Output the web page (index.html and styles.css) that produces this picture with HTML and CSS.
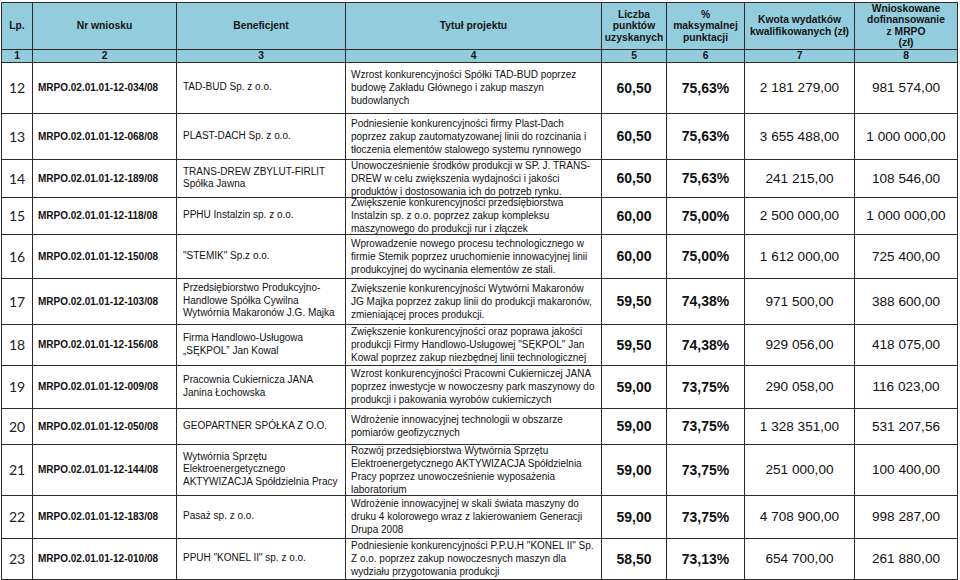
FILE: index.html
```html
<!DOCTYPE html>
<html lang="pl">
<head>
<meta charset="utf-8">
<title>Lista projektów MRPO</title>
<link rel="stylesheet" href="styles.css">
</head>
<body>
<div class="wrap">
<table class="grid">
  <colgroup>
    <col class="c-lp"><col class="c-nr"><col class="c-ben"><col class="c-tyt"><col class="c-pkt"><col class="c-proc"><col class="c-kw"><col class="c-dof">
  </colgroup>
  <thead>
    <tr class="head">
      <th>Lp.</th>
      <th>Nr wniosku</th>
      <th>Beneficjent</th>
      <th>Tytuł projektu</th>
      <th>Liczba<br>punktów<br>uzyskanych</th>
      <th>%<br>maksymalnej<br>punktacji</th>
      <th>Kwota wydatków<br>kwalifikowanych (zł)</th>
      <th>Wnioskowane<br>dofinansowanie<br>z MRPO<br>(zł)</th>
    </tr>
    <tr class="nums">
      <th>1</th><th>2</th><th>3</th><th>4</th><th>5</th><th>6</th><th>7</th><th>8</th>
    </tr>
  </thead>
  <tbody>
    <tr class="h51">
      <td class="lp">12</td><td class="nr">MRPO.02.01.01-12-034/08</td>
      <td class="ben">TAD-BUD Sp. z o.o.</td>
      <td class="tyt"><div class="t">Wzrost konkurencyjności Spółki TAD-BUD poprzez<br>budowę Zakładu Głównego i zakup maszyn<br>budowlanych</div></td>
      <td class="pkt">60,50</td><td class="proc">75,63%</td><td class="kw">2 181 279,00</td><td class="kw">981 574,00</td>
    </tr>
    <tr class="h46">
      <td class="lp">13</td><td class="nr">MRPO.02.01.01-12-068/08</td>
      <td class="ben">PLAST-DACH Sp. z o.o.</td>
      <td class="tyt"><div class="t">Podniesienie konkurencyjności firmy Plast-Dach<br>poprzez zakup zautomatyzowanej linii do rozcinania i<br>tłoczenia elementów stalowego systemu rynnowego</div></td>
      <td class="pkt">60,50</td><td class="proc">75,63%</td><td class="kw">3 655 488,00</td><td class="kw">1 000 000,00</td>
    </tr>
    <tr class="h38">
      <td class="lp">14</td><td class="nr">MRPO.02.01.01-12-189/08</td>
      <td class="ben">TRANS-DREW ZBYLUT-FIRLIT<br>Spółka Jawna</td>
      <td class="tyt"><div class="t">Unowocześnienie środków produkcji w SP. J. TRANS-<br>DREW w celu zwiększenia wydajności i jakości<br>produktów i dostosowania ich do potrzeb rynku.</div></td>
      <td class="pkt">60,50</td><td class="proc">75,63%</td><td class="kw">241 215,00</td><td class="kw">108 546,00</td>
    </tr>
    <tr class="h37">
      <td class="lp">15</td><td class="nr">MRPO.02.01.01-12-118/08</td>
      <td class="ben">PPHU Instalzin sp. z o.o.</td>
      <td class="tyt"><div class="t">Zwiększenie konkurencyjności przedsiębiorstwa<br>Instalzin sp. z o.o. poprzez zakup kompleksu<br>maszynowego do produkcji rur i złączek</div></td>
      <td class="pkt">60,00</td><td class="proc">75,00%</td><td class="kw">2 500 000,00</td><td class="kw">1 000 000,00</td>
    </tr>
    <tr class="h44">
      <td class="lp">16</td><td class="nr">MRPO.02.01.01-12-150/08</td>
      <td class="ben">"STEMIK" Sp.z o.o.</td>
      <td class="tyt"><div class="t">Wprowadzenie nowego procesu technologicznego w<br>firmie Stemik poprzez uruchomienie innowacyjnej linii<br>produkcyjnej do wycinania elementów ze stali.</div></td>
      <td class="pkt">60,00</td><td class="proc">75,00%</td><td class="kw">1 612 000,00</td><td class="kw">725 400,00</td>
    </tr>
    <tr class="h46">
      <td class="lp">17</td><td class="nr">MRPO.02.01.01-12-103/08</td>
      <td class="ben">Przedsiębiorstwo Produkcyjno-<br>Handlowe Spółka Cywilna<br>Wytwórnia Makaronów J.G. Majka</td>
      <td class="tyt"><div class="t">Zwiększenie konkurencyjności Wytwórni Makaronów<br>JG Majka poprzez zakup linii do produkcji makaronów,<br>zmieniającej proces produkcji.</div></td>
      <td class="pkt">59,50</td><td class="proc">74,38%</td><td class="kw">971 500,00</td><td class="kw">388 600,00</td>
    </tr>
    <tr class="h41">
      <td class="lp">18</td><td class="nr">MRPO.02.01.01-12-156/08</td>
      <td class="ben">Firma Handlowo-Usługowa<br>„SĘKPOL” Jan Kowal</td>
      <td class="tyt"><div class="t">Zwiększenie konkurencyjności oraz poprawa jakości<br>produkcji Firmy Handlowo-Usługowej "SĘKPOL" Jan<br>Kowal poprzez zakup niezbędnej linii technologicznej</div></td>
      <td class="pkt">59,50</td><td class="proc">74,38%</td><td class="kw">929 056,00</td><td class="kw">418 075,00</td>
    </tr>
    <tr class="h43">
      <td class="lp">19</td><td class="nr">MRPO.02.01.01-12-009/08</td>
      <td class="ben">Pracownia Cukiernicza JANA<br>Janina Łochowska</td>
      <td class="tyt"><div class="t">Wzrost konkurencyjności Pracowni Cukierniczej JANA<br>poprzez inwestycje w nowoczesny park maszynowy do<br>produkcji i pakowania wyrobów cukierniczych</div></td>
      <td class="pkt">59,00</td><td class="proc">73,75%</td><td class="kw">290 058,00</td><td class="kw">116 023,00</td>
    </tr>
    <tr class="h36">
      <td class="lp">20</td><td class="nr">MRPO.02.01.01-12-050/08</td>
      <td class="ben">GEOPARTNER SPÓŁKA Z O.O.</td>
      <td class="tyt"><div class="t">Wdrożenie innowacyjnej technologii w obszarze<br>pomiarów geofizycznych</div></td>
      <td class="pkt">59,00</td><td class="proc">73,75%</td><td class="kw">1 328 351,00</td><td class="kw">531 207,56</td>
    </tr>
    <tr class="h51">
      <td class="lp">21</td><td class="nr">MRPO.02.01.01-12-144/08</td>
      <td class="ben">Wytwórnia Sprzętu<br>Elektroenergetycznego<br>AKTYWIZACJA Spółdzielnia Pracy</td>
      <td class="tyt"><div class="t">Rozwój przedsiębiorstwa Wytwórnia Sprzętu<br>Elektroenergetycznego AKTYWIZACJA Spółdzielnia<br>Pracy poprzez unowocześnienie wyposażenia<br>laboratorium</div></td>
      <td class="pkt">59,00</td><td class="proc">73,75%</td><td class="kw">251 000,00</td><td class="kw">100 400,00</td>
    </tr>
    <tr class="h43">
      <td class="lp">22</td><td class="nr">MRPO.02.01.01-12-183/08</td>
      <td class="ben">Pasaż sp. z o.o.</td>
      <td class="tyt"><div class="t">Wdrożenie innowacyjnej w skali świata maszyny do<br>druku 4 kolorowego wraz z lakierowaniem Generacji<br>Drupa 2008</div></td>
      <td class="pkt">59,00</td><td class="proc">73,75%</td><td class="kw">4 708 900,00</td><td class="kw">998 287,00</td>
    </tr>
    <tr class="h41">
      <td class="lp">23</td><td class="nr">MRPO.02.01.01-12-010/08</td>
      <td class="ben">PPUH "KONEL II" sp. z o.o.</td>
      <td class="tyt"><div class="t">Podniesienie konkurencyjności P.P.U.H "KONEL II" Sp.<br>Z o.o. poprzez zakup nowoczesnych maszyn dla<br>wydziału przygotowania produkcji</div></td>
      <td class="pkt">58,50</td><td class="proc">73,13%</td><td class="kw">654 700,00</td><td class="kw">261 880,00</td>
    </tr>
  </tbody>
</table>
</div>
</body>
</html>
```

FILE: styles.css
```css
html, body {
  margin: 0;
  padding: 0;
  background: #ffffff;
}

body {
  font-family: "Liberation Sans", Arial, sans-serif;
  color: #111111;
}

.wrap {
  padding: 2px 0 0 1px;
}

.grid {
  border-collapse: collapse;
  table-layout: fixed;
  width: 957px;
  border: 1px solid #3e5a68;
}

.c-lp { width: 31px; }
.c-nr { width: 144px; }
.c-ben { width: 169px; }
.c-tyt { width: 256px; }
.c-pkt { width: 65px; }
.c-proc { width: 78px; }
.c-kw { width: 110px; }
.c-dof { width: 103px; }

.grid th,
.grid td {
  border: 1px solid #2b2b2b;
  padding: 0;
  vertical-align: middle;
}

.grid thead th {
  background: #93cddd;
  font-weight: bold;
  font-size: 10.3px;
  line-height: 11.4px;
  text-align: center;
  color: #141414;
}

.head th {
  height: 44px;
}

.nums th {
  height: 12px;
  line-height: 12px;
}

.lp {
  font-family: Lato, "Open Sans", sans-serif;
  font-size: 14px;
  text-align: center;
  color: #222222;
}

.nr {
  font-weight: bold;
  font-size: 10px;
  padding-left: 5px !important;
  white-space: nowrap;
}

.ben {
  font-size: 10px;
  line-height: 12.6px;
  padding-left: 6px !important;
}

.tyt {
  font-size: 10px;
  padding-left: 5px !important;
}

.t {
  display: flex;
  flex-direction: column;
  justify-content: center;
  line-height: 13px;
  white-space: nowrap;
  overflow: visible;
}

.pkt,
.proc {
  font-weight: bold;
  font-size: 14px;
  text-align: center;
}

.kw {
  font-size: 13.6px;
  text-align: center;
}

.h36 .t { height: 35px; }
.h37 .t { height: 36px; }
.h38 .t { height: 37px; }
.h41 .t { height: 40px; }
.h43 .t { height: 42px; }
.h44 .t { height: 43px; }
.h46 .t { height: 45px; }
.h51 .t { height: 50px; }
.h52 .t { height: 51px; }
```
